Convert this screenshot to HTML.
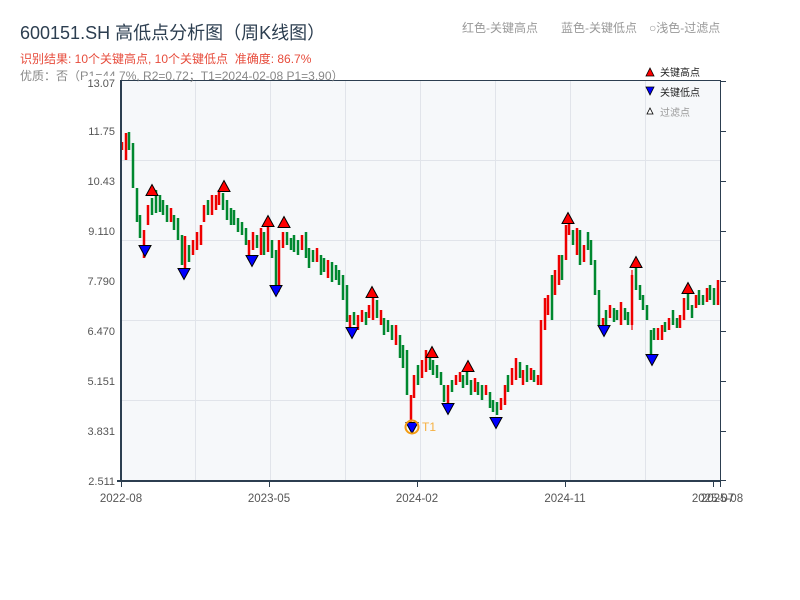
<!DOCTYPE html>
<html><head><meta charset="utf-8"><style>
body{margin:0;width:800px;height:600px;background:#fff;overflow:hidden;font-family:"Liberation Sans","Noto Sans CJK SC",sans-serif}
</style></head><body>
<svg width="800" height="600" xmlns="http://www.w3.org/2000/svg" style="position:absolute;left:0;top:0;font-family:'Liberation Sans','Noto Sans CJK SC',sans-serif">
<rect x="121" y="81" width="599" height="400" fill="#f6f8fa"/>
<g stroke="#e1e4ea" stroke-width="1">
<line x1="195.5" y1="81" x2="195.5" y2="481"/><line x1="270.5" y1="81" x2="270.5" y2="481"/><line x1="345.5" y1="81" x2="345.5" y2="481"/><line x1="420.5" y1="81" x2="420.5" y2="481"/><line x1="495.5" y1="81" x2="495.5" y2="481"/><line x1="570.5" y1="81" x2="570.5" y2="481"/><line x1="645.5" y1="81" x2="645.5" y2="481"/>
<line x1="121" y1="160.5" x2="720" y2="160.5"/><line x1="121" y1="240.5" x2="720" y2="240.5"/><line x1="121" y1="320.5" x2="720" y2="320.5"/><line x1="121" y1="400.5" x2="720" y2="400.5"/>
</g>
<path fill="none" stroke="#00882f" stroke-width="2.5" d="M129 132V150M133 143V188M137 188V222M140 215V238M152 198V215M156 190V213M160 195V212M163 200V215M167 205V222M174 215V230M178 218V240M182 235V265M189 245V262M208 200V215M223 193V210M227 200V220M231 208V225M234 210V225M238 218V232M242 222V235M246 228V245M257 235V248M264 232V255M272 240V258M276 250V290M287 232V245M291 238V250M294 235V252M298 240V255M306 232V258M309 248V268M313 250V262M321 255V275M324 258V272M332 262V282M336 265V280M339 270V285M343 275V300M347 285V322M354 312V325M366 312V325M377 300V318M384 318V335M388 320V332M392 325V340M400 335V358M403 345V368M407 350V395M418 365V385M430 355V370M433 360V375M437 365V378M441 372V385M444 385V402M452 380V392M463 375V388M467 365V385M471 380V395M478 382V395M482 385V400M490 392V408M493 400V412M497 402V415M508 375V392M520 362V378M527 365V382M534 370V382M552 275V320M562 255V280M573 230V245M580 230V265M588 232V250M591 240V265M595 260V295M599 290V325M606 310V325M614 308V322M617 310V320M625 308V320M628 312V325M636 268V290M640 285V300M643 295V310M647 305V320M651 330V355M654 328V340M665 322V332M673 310V325M677 318V328M688 292V310M692 305V318M699 290V305M703 295V305M710 285V300M714 288V305"/>
<path fill="none" stroke="#e00" stroke-width="2.5" d="M122 142V150M126 133V160M144 230V258M148 205V225M171 208V222M185 236V270M193 240V255M197 232V250M201 225V245M204 205V222M212 195V215M216 195V210M219 190V205M249 240V260M253 232V250M261 228V255M268 225V252M279 240V285M283 232V248M302 235V250M317 248V262M328 260V278M350 315V330M358 315V330M362 310V322M369 305V318M373 298V320M381 310V325M396 325V345M411 395V420M414 375V398M422 360V378M426 350V372M448 385V405M456 375V385M460 372V382M475 378V392M486 385V395M501 398V410M505 385V405M512 368V385M516 358V380M523 370V385M531 368V380M538 375V385M541 320V385M545 298V330M548 295V315M555 270V295M559 255V285M566 225V260M569 222V235M577 228V255M584 245V262M603 318V330M610 305V318M621 302V325M632 275V325M658 328V340M662 325V340M669 318V330M680 315V328M684 298V320M696 295V308M707 288V302M718 280V305"/>
<path fill="none" stroke="#e00" stroke-width="1.2" d="M411 395V425M279 270V292M632 270V330"/>
<g stroke="#2c3e50" fill="none">
<line x1="121" y1="80.5" x2="721" y2="80.5" stroke-width="1"/>
<line x1="720.5" y1="80" x2="720.5" y2="482" stroke-width="1"/>
<line x1="121" y1="80" x2="121" y2="482" stroke-width="2"/>
<line x1="117" y1="481" x2="721" y2="481" stroke-width="2"/>
<g stroke-width="1"><line x1="121.5" y1="481" x2="121.5" y2="487"/><line x1="269.5" y1="481" x2="269.5" y2="487"/><line x1="417.5" y1="481" x2="417.5" y2="487"/><line x1="565.5" y1="481" x2="565.5" y2="487"/><line x1="713.5" y1="481" x2="713.5" y2="487"/><line x1="720.5" y1="481" x2="720.5" y2="487"/>
<line x1="720" y1="81.5" x2="726" y2="81.5"/><line x1="720" y1="131.5" x2="726" y2="131.5"/><line x1="720" y1="181.5" x2="726" y2="181.5"/><line x1="720" y1="231.5" x2="726" y2="231.5"/><line x1="720" y1="281.5" x2="726" y2="281.5"/><line x1="720" y1="331.5" x2="726" y2="331.5"/><line x1="720" y1="381.5" x2="726" y2="381.5"/><line x1="720" y1="431.5" x2="726" y2="431.5"/><line x1="720" y1="480.5" x2="726" y2="480.5"/></g>
</g>
<g font-size="11" fill="#555" text-anchor="end">
<text x="115" y="135">11.75</text><text x="115" y="185">10.43</text><text x="115" y="235">9.110</text><text x="115" y="285">7.790</text><text x="115" y="335">6.470</text><text x="115" y="385">5.151</text><text x="115" y="435">3.831</text><text x="115" y="485">2.511</text>
</g>
<g font-size="11.5" fill="#555" text-anchor="middle">
<text x="121" y="502">2022-08</text><text x="269" y="502">2023-05</text><text x="417" y="502">2024-02</text><text x="565" y="502">2024-11</text><text x="713" y="502">2025-07</text><text x="722" y="502">2025-08</text>
</g>
<text x="20" y="39" font-size="18" fill="#2c3e50">600151.SH 高低点分析图（周K线图）</text>
<text x="20" y="63" font-size="12" fill="#e74c3c">识别结果: 10个关键高点, 10个关键低点 &#160;准确度: 86.7%</text>
<text x="20" y="80" font-size="12" fill="#888">优质：否（R1=44.7%, R2=0.72；T1=2024-02-08 P1=3.90）</text>
<rect x="84" y="76" width="34" height="12" fill="#fff"/>
<text x="115" y="87" font-size="11" fill="#555" text-anchor="end">13.07</text>
<g font-size="12" fill="#999"><text x="462" y="32">红色-关键高点</text><text x="561" y="32">蓝色-关键低点</text><text x="649" y="32">○浅色-过滤点</text></g>
<polygon points="646,76 654,76 650,68" fill="#f00" stroke="#000" stroke-width="0.8"/>
<polygon points="646,87 654,87 650,95" fill="#00f" stroke="#000" stroke-width="0.8"/>
<polygon points="647,114 653,114 650,108" fill="#fff" stroke="#000" stroke-width="0.8"/>
<g font-size="10"><text x="660" y="76" fill="#222">关键高点</text><text x="660" y="96" fill="#222">关键低点</text><text x="660" y="116" fill="#999">过滤点</text></g>
<g fill="#f00" stroke="#000" stroke-width="1">
<polygon points="146,195.5 158,195.5 152,184.5"/><polygon points="218,191.5 230,191.5 224,180.5"/><polygon points="262,226.5 274,226.5 268,215.5"/><polygon points="278,227.5 290,227.5 284,216.5"/><polygon points="366,297.5 378,297.5 372,286.5"/><polygon points="426,357.5 438,357.5 432,346.5"/><polygon points="462,371.5 474,371.5 468,360.5"/><polygon points="562,223.5 574,223.5 568,212.5"/><polygon points="630,267.5 642,267.5 636,256.5"/><polygon points="682,293.5 694,293.5 688,282.5"/>
</g>
<g fill="#00f" stroke="#000" stroke-width="1">
<polygon points="139,245.5 151,245.5 145,256.5"/><polygon points="178,268.5 190,268.5 184,279.5"/><polygon points="246,255.5 258,255.5 252,266.5"/><polygon points="270,285.5 282,285.5 276,296.5"/><polygon points="346,327.5 358,327.5 352,338.5"/><polygon points="406,422.5 418,422.5 412,433.5"/><polygon points="442,403.5 454,403.5 448,414.5"/><polygon points="490,417.5 502,417.5 496,428.5"/><polygon points="598,325.5 610,325.5 604,336.5"/><polygon points="646,354.5 658,354.5 652,365.5"/>
</g>
<circle cx="412" cy="427" r="6.5" fill="none" stroke="#f39c12" stroke-width="2"/>
<text x="422" y="431" font-size="12" fill="#f5b041">T1</text>
</svg>
</body></html>
